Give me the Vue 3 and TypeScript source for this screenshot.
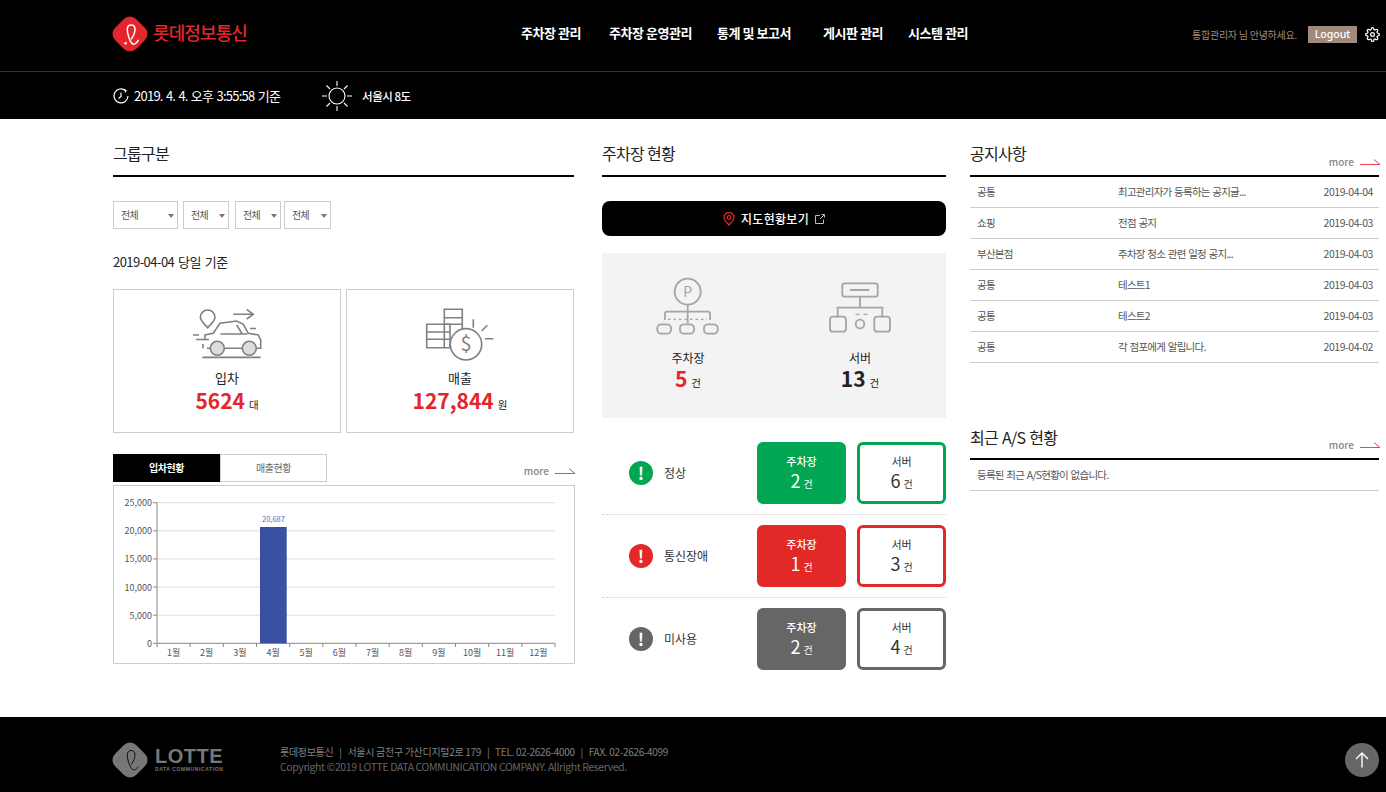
<template>
  <div class="page">
    <header class="header">
      <div class="top-bar">
        <div class="logo">
          <svg width="36" height="36" viewBox="0 0 36 36">
            <rect x="3" y="3" width="30" height="30" rx="9" transform="rotate(45 18 18)" fill="#e3262b" />
            <path d="M26.300 24.300C24 28 21.500 29 20 27.500c-2-2-4.700-9-4.700-14 0-3 1.800-4.500 3.800-4.500s3.900 1.500 3.900 4.300c0 3-1.500 6.500-3.500 9.500" fill="none" stroke="#fff" stroke-width="1.500" stroke-linecap="round" />
            <circle cx="13.600" cy="27.300" r="1.200" fill="#fff" />
          </svg>
          <span class="logo-text">롯데정보통신</span>
        </div>
        <nav class="nav">
          <a v-for="item in navItems" :key="item">{{ item }}</a>
        </nav>
        <div class="user-box">
          <span class="hello">통합관리자 님 안녕하세요.</span>
          <button class="logout">Logout</button>
          <svg class="gear" width="15" height="15" viewBox="0 0 24 24" fill="none" stroke="#fff" stroke-width="2">
            <circle cx="12" cy="12" r="3" />
            <path d="M19.4 15a1.65 1.65 0 0 0 .33 1.82l.06.06a2 2 0 0 1 0 2.83 2 2 0 0 1-2.83 0l-.06-.06a1.65 1.65 0 0 0-1.82-.33 1.65 1.65 0 0 0-1 1.51V21a2 2 0 0 1-2 2 2 2 0 0 1-2-2v-.09A1.65 1.65 0 0 0 9 19.4a1.65 1.65 0 0 0-1.82.33l-.06.06a2 2 0 0 1-2.83 0 2 2 0 0 1 0-2.83l.06-.06a1.65 1.65 0 0 0 .33-1.82 1.65 1.65 0 0 0-1.51-1H3a2 2 0 0 1-2-2 2 2 0 0 1 2-2h.09A1.65 1.65 0 0 0 4.6 9a1.65 1.65 0 0 0-.33-1.82l-.06-.06a2 2 0 0 1 0-2.83 2 2 0 0 1 2.83 0l.06.06a1.65 1.65 0 0 0 1.82.33H9a1.65 1.65 0 0 0 1-1.51V3a2 2 0 0 1 2-2 2 2 0 0 1 2 2v.09a1.65 1.65 0 0 0 1 1.51 1.65 1.65 0 0 0 1.82-.33l.06-.06a2 2 0 0 1 2.83 0 2 2 0 0 1 0 2.83l-.06.06a1.65 1.65 0 0 0-.33 1.82V9a1.65 1.65 0 0 0 1.51 1H21a2 2 0 0 1 2 2 2 2 0 0 1-2 2h-.09a1.65 1.65 0 0 0-1.51 1z" />
          </svg>
        </div>
      </div>
      <div class="sub-bar">
        <svg width="16" height="16" viewBox="0 0 16 16" fill="none" stroke="#fff" stroke-width="1.200">
          <path d="M12.500 2.500A7 7 0 1 0 15 8" />
          <path d="M11 1.500l2 1-1 2" />
          <path d="M8 4.500V8.500L5.500 10.500" />
        </svg>
        <span class="now">2019. 4. 4. 오후 3:55:58 기준</span>
        <svg class="sun" width="32" height="32" viewBox="0 0 32 32" fill="none" stroke="#fff" stroke-width="1.100">
          <circle cx="16" cy="16" r="8" />
          <path d="M16 1v5M16 26v5M1 16h5M26 16h5M5.500 5.500l3.500 3.500M23 23l3.500 3.500M5.500 26.500L9 23M23 9l3.500-3.500" />
        </svg>
        <span class="weather">서울시 8도</span>
      </div>
    </header>

    <main class="main">
      <section class="col col-left">
        <div class="sec-head"><h2>그룹구분</h2></div>
        <div class="selects">
          <div v-for="w in selectWidths" :key="w.id" class="select" :style="{ width: w.width + 'px', marginRight: w.gap + 'px' }">
            전체<i class="caret"></i>
          </div>
        </div>
        <p class="today">2019-04-04 당일 기준</p>
        <div class="cards">
          <div class="card">
            <div class="card-icon">
              <svg width="72" height="54" viewBox="0 0 72 54" fill="none" stroke="#808080" stroke-width="1.600">
                <path d="M16.700 20.700C13 16.500 9.400 14 9.400 10.300a7.300 7.300 0 0 1 14.600 0c0 3.700-3.600 6.200-7.300 10.400z" />
                <path d="M42.300 7.300h20M55.700 2.300l6.600 5-6.600 4.700" />
                <path d="M14 33v-5l8.300-1.700L29 16.300 45.700 14l6.600 3.300 5 9 10 1.700 2.400 5v8.300h-4M19 41.300h-3M33.600 41.300H51" />
                <path d="M29.500 27h27M45.700 18l5.500 9M59 21.500h6" />
                <path d="M2 28h6M5 32.500h13M12 37v4.300" />
                <circle cx="26.300" cy="41.300" r="7" fill="#ddd" />
                <circle cx="58.300" cy="41.300" r="7" fill="#ddd" />
                <path d="M11.300 50.300h58.400" stroke-width="1.800" />
              </svg>
            </div>
            <div class="card-label">입차</div>
            <div class="card-value"><strong>5624</strong><span>대</span></div>
          </div>
          <div class="card">
            <div class="card-icon">
              <svg width="70" height="56" viewBox="0 0 70 56" fill="none" stroke="#808080" stroke-width="1.600">
                <path d="M1.700 17.300H25V40.700H1.700zM1.700 25H25M1.700 32.300H25M19.300 17.300V40.700" />
                <path d="M19.300 17.300V2.300H37.300V22M19.300 10.700H37.300M19.300 17.300H37.300" />
                <circle cx="41" cy="37.300" r="15.700" fill="#fff" />
                <path d="M48.300 12.300v8.400M56.700 24l5.600-5.700M60 31.700h8.300" />
                <text x="41" y="44" text-anchor="middle" class="dollar">$</text>
              </svg>
            </div>
            <div class="card-label">매출</div>
            <div class="card-value"><strong>127,844</strong><span>원</span></div>
          </div>
        </div>
        <div class="tab-row">
          <div class="tabs">
            <div class="tab active">입차현황</div>
            <div class="tab">매출현황</div>
          </div>
          <a class="more">more<svg width="21" height="7" viewBox="0 0 21 7" fill="none" stroke="#e8474c"><path d="M0 5.500h20L14 .5" /></svg></a>
        </div>
        <div class="chart">
          <svg width="460" height="177" viewBox="0 0 460 177">
            <g v-for="t in yTicks" :key="t.label">
              <line :x1="43" :x2="441" :y1="t.y" :y2="t.y" :stroke="t.label === '0' ? '#888' : '#ddd'" />
              <line :x1="39" :x2="43" :y1="t.y" :y2="t.y" stroke="#888" />
              <text :x="38" :y="t.y + 3.500" text-anchor="end" class="axis">{{ t.label }}</text>
            </g>
            <line x1="43" x2="43" y1="16.700" y2="157.300" stroke="#888" />
            <g v-for="(m, i) in months" :key="m">
              <line :x1="43 + i * step" :x2="43 + i * step" y1="157.300" y2="161" stroke="#888" />
              <text :x="43 + (i + 0.500) * step" y="170" text-anchor="middle" class="axis">{{ m }}</text>
            </g>
            <line :x1="441" :x2="441" y1="157.300" y2="161" stroke="#888" />
            <rect x="146" y="41" width="26.700" height="116.300" fill="#3851a3" />
            <text x="159.500" y="36" text-anchor="middle" class="bar-label">20,687</text>
          </svg>
        </div>
      </section>

      <section class="col col-mid">
        <div class="sec-head"><h2>주차장 현황</h2></div>
        <button class="map-btn">
          <svg width="12" height="14" viewBox="0 0 12 14" fill="none" stroke="#e3262b" stroke-width="1.300">
            <path d="M6 13C3 10 1 8 1 5.500a5 5 0 0 1 10 0C11 8 9 10 6 13z" />
            <circle cx="6" cy="5.500" r="1.800" />
          </svg>
          <span>지도현황보기</span>
          <svg width="10" height="10" viewBox="0 0 10 10" fill="none" stroke="#bbb" stroke-width="1">
            <path d="M5 1.500H.5v8h8V5.500M6.500.5h3v3M9.500.5L5 5" />
          </svg>
        </button>
        <div class="summary">
          <div class="summary-item">
            <svg width="66" height="62" viewBox="0 0 66 62" fill="none" stroke="#a5a5a5" stroke-width="1.800">
              <circle cx="32.700" cy="16.700" r="13" />
              <text x="32.700" y="21.800" text-anchor="middle" class="pin-p">P</text>
              <path d="M32.700 30v18.300M10 45v-6.300a2 2 0 0 1 2-2h41a2 2 0 0 1 2 2V45" />
              <path d="M13 44.300h39" stroke-dasharray="2.500 3" stroke-width="1.200" />
              <rect x="2.300" y="49.300" width="13.700" height="9.400" rx="4" />
              <rect x="25" y="49.300" width="14" height="9.400" rx="4" />
              <rect x="49" y="49.300" width="13.700" height="9.400" rx="4" />
            </svg>
            <div class="sum-label">주차장</div>
            <div class="sum-value"><strong class="red">5</strong><span>건</span></div>
          </div>
          <div class="summary-item">
            <svg width="70" height="62" viewBox="0 0 70 62" fill="none" stroke="#a5a5a5" stroke-width="1.800">
              <rect x="17.300" y="8.300" width="35.400" height="13.400" rx="2.500" />
              <path d="M25 15h19.300M35 21.700v11M12.700 41.700v-9h44.600v9" />
              <path d="M30.500 39.300h4M38.500 39.300h4" stroke-width="1.200" />
              <rect x="5" y="41.700" width="16" height="15" rx="3" />
              <circle cx="35" cy="49" r="4.300" />
              <rect x="49.300" y="41.700" width="15.700" height="15" rx="3" />
            </svg>
            <div class="sum-label">서버</div>
            <div class="sum-value"><strong>13</strong><span>건</span></div>
          </div>
        </div>
        <div class="status-list">
          <div v-for="s in statuses" :key="s.name" class="status-row">
            <i class="status-icon" :style="{ background: s.color }">!</i>
            <span class="status-name">{{ s.name }}</span>
            <div class="box filled" :style="{ background: s.color, borderColor: s.color }">
              <div class="box-label">주차장</div>
              <div class="box-value"><b>{{ s.lots }}</b><span>건</span></div>
            </div>
            <div class="box" :style="{ borderColor: s.color }">
              <div class="box-label">서버</div>
              <div class="box-value"><b>{{ s.servers }}</b><span>건</span></div>
            </div>
          </div>
        </div>
      </section>

      <section class="col col-right">
        <div class="sec-head">
          <h2>공지사항</h2>
          <a class="more">more<svg width="21" height="7" viewBox="0 0 21 7" fill="none" stroke="#e8474c"><path d="M0 5.500h20L14 .5" /></svg></a>
        </div>
        <ul class="notice">
          <li v-for="n in notices" :key="n.title">
            <span class="n-cat">{{ n.cat }}</span>
            <span class="n-title">{{ n.title }}</span>
            <span class="n-date">{{ n.date }}</span>
          </li>
        </ul>
        <div class="sec-head second">
          <h2>최근 A/S 현황</h2>
          <a class="more">more<svg width="21" height="7" viewBox="0 0 21 7" fill="none" stroke="#e8474c"><path d="M0 5.500h20L14 .5" /></svg></a>
        </div>
        <ul class="notice">
          <li><span>등록된 최근 A/S현황이 없습니다.</span></li>
        </ul>
      </section>
    </main>

    <footer class="footer">
      <div class="foot-logo">
        <svg width="36" height="36" viewBox="0 0 36 36">
          <rect x="3" y="3" width="30" height="30" rx="9" transform="rotate(45 18 18)" fill="#777" />
          <path d="M26.300 25C24 28 21.500 28.500 20 27c-2-2-4.700-9-4.700-14 0-3 1.800-4.500 3.800-4.500s3.900 1.500 3.900 4.300c0 3-1.500 6.500-3.500 9.500" fill="none" stroke="#111" stroke-width="1" stroke-linecap="round" />
        </svg>
        <div class="foot-brand">
          <div class="lotte">LOTTE</div>
          <div class="dc">DATA COMMUNICATION</div>
        </div>
      </div>
      <div class="foot-text">
        <p>롯데정보통신 &nbsp;&nbsp;|&nbsp;&nbsp; 서울시 금천구 가산디지털2로 179 &nbsp;&nbsp;|&nbsp;&nbsp; TEL. 02-2626-4000 &nbsp;&nbsp;|&nbsp;&nbsp; FAX. 02-2626-4099</p>
        <p class="copy">Copyright ©2019 LOTTE DATA COMMUNICATION COMPANY. Allright Reserved.</p>
      </div>
      <button class="to-top">
        <svg width="14" height="16" viewBox="0 0 14 16" fill="none" stroke="#fff" stroke-width="1.400">
          <path d="M7 15.500V1M1 7l6-6 6 6" />
        </svg>
      </button>
    </footer>
  </div>
</template>

<script setup lang="ts">
const navItems = ["주차장 관리", "주차장 운영관리", "통계 및 보고서", "게시판 관리", "시스템 관리"];

const selectWidths = [
  { id: 1, width: 65, gap: 5 },
  { id: 2, width: 46, gap: 6 },
  { id: 3, width: 46, gap: 3 },
  { id: 4, width: 47, gap: 0 },
];

const yTicks = ["25,000", "20,000", "15,000", "10,000", "5,000", "0"].map((label, i) => ({
  label,
  y: 16.7 + i * 28.12,
}));

const months = Array.from({ length: 12 }, (_, i) => `${i + 1}월`);
const step = 398 / 12;

const statuses = [
  { name: "정상", color: "#00a651", lots: 2, servers: 6 },
  { name: "통신장애", color: "#e32828", lots: 1, servers: 3 },
  { name: "미사용", color: "#666666", lots: 2, servers: 4 },
];

const notices = [
  { cat: "공통", title: "최고관리자가 등록하는 공지글...", date: "2019-04-04" },
  { cat: "쇼핑", title: "전점 공지", date: "2019-04-03" },
  { cat: "부산본점", title: "주차장 청소 관련 일정 공지...", date: "2019-04-03" },
  { cat: "공통", title: "테스트1", date: "2019-04-03" },
  { cat: "공통", title: "테스트2", date: "2019-04-03" },
  { cat: "공통", title: "각 점포에게 알립니다.", date: "2019-04-02" },
];
</script>

<style>
body {
  margin: 0;
  background: #fff;
}
</style>

<style scoped>
.page {
  position: relative;
  width: 1386px;
  height: 792px;
  overflow: hidden;
  font-family: "Noto Sans CJK KR", "Noto Sans", sans-serif;
  color: #222;
}

.header {
  background: #000;
  color: #fff;
}

.top-bar {
  display: flex;
  align-items: center;
  height: 72px;
  padding: 0 6px 4px 113px;
  box-sizing: border-box;
  border-bottom: 1px solid #333;
}

.logo {
  display: flex;
  align-items: center;
  width: 408px;
  margin-left: -1px;
  margin-right: 1px;
}

.logo-text {
  margin: -3px 0 0 5px;
  font-size: 18px;
  font-weight: 500;
  color: #e3262b;
  letter-spacing: -0.9px;
}

.nav {
  display: grid;
  grid-template-columns: 88px 108px 106px 85px auto;
  margin-top: -2px;
  font-size: 13px;
  font-weight: 700;
  letter-spacing: -0.45px;
}

.user-box {
  display: flex;
  align-items: center;
  margin-top: 1px;
  margin-left: auto;
}

.hello {
  font-size: 10px;
  letter-spacing: -0.25px;
  color: #a08a7a;
  margin-right: 11px;
}

.logout {
  width: 49px;
  height: 17px;
  padding: 0;
  border: 0;
  background: #a08a7e;
  color: #fff;
  font: 500 10.500px "Noto Sans", sans-serif;
}

.gear {
  margin-left: 8px;
}

.sub-bar {
  display: flex;
  align-items: center;
  height: 47px;
  padding-left: 113px;
}

.now {
  margin-left: 5px;
  font-size: 13px;
  letter-spacing: -0.75px;
  word-spacing: 1px;
}

.sun {
  margin-left: 41px;
}

.weather {
  margin-left: 9px;
  font-size: 11.500px;
  font-weight: 500;
  letter-spacing: -0.5px;
}

.main {
  display: flex;
  align-items: flex-start;
  height: 598px;
  box-sizing: border-box;
  padding: 16px 0 0 113px;
}

.col-left {
  width: 461px;
  margin-right: 28px;
}

.col-mid {
  width: 344px;
  margin-right: 24px;
}

.col-right {
  width: 409px;
}

.sec-head {
  display: flex;
  justify-content: space-between;
  align-items: flex-end;
  height: 42px;
  box-sizing: border-box;
  border-bottom: 2px solid #000;
  padding-bottom: 6px;
}

.sec-head.second {
  margin-top: 55px;
}

.sec-head h2 {
  align-self: flex-start;
  margin: 0;
  font-size: 16px;
  font-weight: 400;
  letter-spacing: -0.7px;
  line-height: 36px;
  height: 32px;
}

.sec-head.second h2 {
  line-height: 38px;
  word-spacing: 1px;
}

.selects {
  display: flex;
  margin-top: 24px;
}

.select {
  position: relative;
  height: 28px;
  box-sizing: border-box;
  border: 1px solid #ccc;
  padding-left: 7px;
  font-size: 10px;
  letter-spacing: -0.7px;
  line-height: 26px;
  color: #555;
}

.caret {
  position: absolute;
  right: 3px;
  top: 12px;
  border: 3px solid transparent;
  border-top: 4px solid #777;
  border-bottom: 0;
}

.today {
  margin: 23px 0 17px;
  font-size: 13px;
  letter-spacing: -0.55px;
  word-spacing: 1.500px;
  line-height: 20px;
}

.cards {
  display: flex;
  justify-content: space-between;
}

.card {
  display: flex;
  flex-direction: column;
  align-items: center;
  width: 228px;
  height: 144px;
  box-sizing: border-box;
  border: 1px solid #ccc;
  padding-top: 17px;
}

.card-icon {
  height: 56px;
}

.card-icon svg {
  display: block;
}

.card-label {
  margin-top: 5px;
  font-size: 13px;
  line-height: 20px;
}

.card-value {
  line-height: 24px;
}

.card-value strong {
  font-size: 21px;
  font-weight: 700;
  color: #e3262b;
}

.card-value span,
.sum-value span {
  margin-left: 4px;
  font-size: 10.500px;
}

.tab-row {
  display: flex;
  justify-content: space-between;
  align-items: flex-end;
  margin-top: 21px;
}

.tabs {
  display: flex;
}

.tab {
  width: 107px;
  height: 28px;
  box-sizing: border-box;
  border: 1px solid #ccc;
  text-align: center;
  font-size: 10px;
  letter-spacing: -0.5px;
  line-height: 26px;
  color: #666;
}

.tab.active {
  background: #000;
  border-color: #000;
  color: #fff;
  font-weight: 700;
}

.more {
  display: flex;
  align-items: center;
  margin-right: -2px;
  font-size: 10px;
  font-weight: 500;
  color: #888;
  line-height: 14px;
}

.more svg {
  margin-left: 6px;
}

.tab-row .more {
  margin-bottom: 4px;
}

.chart {
  margin-top: 3px;
  width: 462px;
  height: 179px;
  box-sizing: border-box;
  border: 1px solid #ccc;
}

.chart svg {
  display: block;
}

.axis {
  font-size: 9px;
  fill: #555;
}

.bar-label {
  font-size: 7.500px;
  fill: #5a70b8;
}

.dollar {
  font-size: 20px;
  fill: #808080;
  stroke: none;
}

.pin-p {
  font-size: 14px;
  fill: #a5a5a5;
  stroke: none;
}

.map-btn {
  display: flex;
  justify-content: center;
  align-items: center;
  width: 344px;
  height: 35px;
  margin-top: 24px;
  padding: 0;
  border: 0;
  border-radius: 8px;
  background: #000;
  color: #fff;
  font: 500 12px "Noto Sans CJK KR", sans-serif;
  letter-spacing: 0.3px;
}

.map-btn span {
  margin: 0 6px;
}

.summary {
  display: flex;
  height: 165px;
  margin-top: 17px;
  background: #f3f3f3;
}

.summary-item {
  display: flex;
  flex-direction: column;
  align-items: center;
  width: 172px;
  padding-top: 22px;
}

.sum-label {
  margin-top: 11px;
  font-size: 12px;
  line-height: 20px;
}

.sum-value {
  margin-top: -2px;
  line-height: 24px;
}

.sum-value strong {
  font-size: 21px;
  font-weight: 700;
}

.red {
  color: #e3262b;
}

.status-list {
  margin-top: 14px;
}

.status-row {
  display: flex;
  align-items: center;
  height: 83px;
  box-sizing: border-box;
  padding: 0 0 0 27px;
  border-bottom: 1px dotted #ccc;
}

.status-row:last-child {
  border-bottom-color: transparent;
}

.status-icon {
  width: 24px;
  height: 24px;
  border-radius: 50%;
  color: #fff;
  font-style: normal;
  font-weight: 700;
  font-size: 17px;
  line-height: 24px;
  text-align: center;
}

.status-name {
  width: 93px;
  margin: -2px 0 0 11px;
  font-size: 12px;
  color: #333;
}

.box {
  width: 89px;
  height: 62px;
  box-sizing: border-box;
  margin-left: 0;
  border: 3px solid;
  border-radius: 6px;
  text-align: center;
  color: #333;
}

.box + .box {
  margin-left: 11px;
}

.box.filled {
  color: #fff;
}

.box-label {
  margin-top: 8px;
  font-size: 11px;
  line-height: 16px;
}

.box.filled .box-label {
  font-weight: 500;
}

.box-value {
  margin-top: -1px;
  line-height: 24px;
}

.box-value b {
  font-size: 18px;
  font-weight: 400;
}

.box-value span {
  margin-left: 3px;
  font-size: 10px;
}

.notice {
  margin: 0;
  padding: 0;
  list-style: none;
}

.notice li {
  display: flex;
  align-items: center;
  height: 31px;
  box-sizing: border-box;
  padding: 0 6px 2px 7px;
  border-bottom: 1px solid #ccc;
  font-size: 10.500px;
  letter-spacing: -0.75px;
  word-spacing: 1px;
  color: #555;
}

.n-cat {
  width: 141px;
}

.n-title {
  flex: 1;
}

.n-date {
  letter-spacing: -0.45px;
}

.footer {
  display: flex;
  align-items: center;
  height: 75px;
  padding-left: 113px;
  background: #000;
}

.foot-logo {
  display: flex;
  align-items: center;
  width: 167px;
  margin-top: 10px;
  margin-left: -1px;
  margin-right: 1px;
}

.foot-brand {
  margin-left: 7px;
  color: #777;
}

.lotte {
  font: 700 20px/19px "Liberation Sans", sans-serif;
  letter-spacing: 0.5px;
}

.dc {
  font: 700 5px/6px "Liberation Sans", sans-serif;
  letter-spacing: 0.6px;
  white-space: nowrap;
}

.foot-text {
  margin-top: 8px;
  font-size: 10px;
  letter-spacing: -0.3px;
  line-height: 15px;
  color: #808080;
}

.foot-text p {
  margin: 0;
}

.copy {
  font-size: 10.500px;
  letter-spacing: -0.4px;
  color: #666;
}

.to-top {
  position: absolute;
  left: 1345px;
  top: 743px;
  display: flex;
  align-items: center;
  justify-content: center;
  width: 34px;
  height: 34px;
  padding: 0;
  border: 0;
  border-radius: 50%;
  background: #666;
}
</style>
